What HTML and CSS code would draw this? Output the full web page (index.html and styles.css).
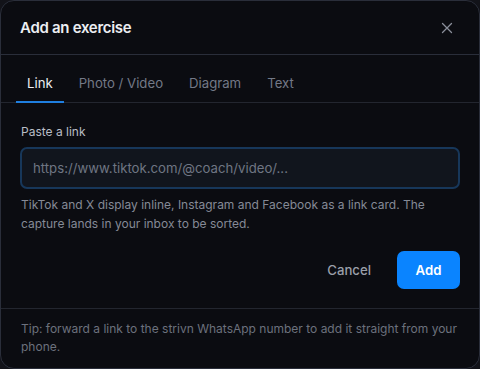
FILE: index.html
```html
<!DOCTYPE html>
<html>
<head>
<meta charset="utf-8">
<link rel="stylesheet" href="styles.css">
</head>
<body>
<div class="dialog">
  <div class="header">
    <h1 class="title">Add an exercise</h1>
    <button class="close" aria-label="Close">
      <svg width="12" height="12" viewBox="0 0 12 12"><path d="M1.5 1.5 L10.5 10.5 M10.5 1.5 L1.5 10.5" stroke="currentColor" stroke-width="1.3" stroke-linecap="round"/></svg>
    </button>
  </div>
  <div class="tabs">
    <div class="tab active">Link</div>
    <div class="tab">Photo / Video</div>
    <div class="tab">Diagram</div>
    <div class="tab">Text</div>
  </div>
  <div class="body">
    <label class="label">Paste a link</label>
    <div class="input">https://www.tiktok.com/@coach/video/...</div>
    <p class="help">TikTok and X display inline, Instagram and Facebook as a link card. The capture lands in your inbox to be sorted.</p>
    <div class="actions">
      <button class="btn cancel">Cancel</button>
      <button class="btn add">Add</button>
    </div>
  </div>
  <div class="footer">Tip: forward a link to the strivn WhatsApp number to add it straight from your phone.</div>
</div>
</body>
</html>
```
FILE: styles.css
```css
* { box-sizing: border-box; }
html, body { margin: 0; padding: 0; background: #121319; }
body { font-family: Inter, "Noto Sans", sans-serif; }
.dialog {
  width: 480px;
  height: 369px;
  background: #0b0c11;
  border: 1px solid #2a2e3a;
  border-radius: 14px;
  display: flex;
  flex-direction: column;
  overflow: hidden;
}
.header {
  height: 54px;
  display: flex;
  align-items: center;
  justify-content: space-between;
  padding: 0 20px 0 19px;
  border-bottom: 1px solid #2a2e3a;
}
.title {
  margin: 0;
  font-size: 15px;
  font-weight: 600;
  color: #eceef2;
  letter-spacing: -0.3px;
}
.close {
  background: none;
  border: 0;
  padding: 0;
  width: 16px;
  height: 16px;
  display: flex;
  align-items: center;
  justify-content: center;
  color: #8a8f9a;
  margin-right: 4px;
}
.tabs {
  display: flex;
  gap: 4px;
  padding: 0 15px;
  height: 48px;
  border-bottom: 1px solid #23262f;
}
.tab {
  padding: 10px 11px 0;
  display: flex;
  align-items: center;
  font-size: 13.2px;
  color: #737987;
  border-bottom: 2px solid transparent;
  margin-bottom: -1px;
}
.tab.active {
  color: #eceef2;
  border-bottom-color: #1f7fe0;
}
.body {
  padding: 20px 19px 19px;
  display: flex;
  flex-direction: column;
}
.label {
  font-size: 12px;
  line-height: 18px;
  color: #b9bdc6;
  padding-left: 1px;
}
.input {
  margin-top: 6px;
  height: 42px;
  border: 2px solid #17375a;
  border-radius: 7px;
  background: #11151d;
  padding: 0 11px;
  display: flex;
  align-items: center;
  font-size: 13.2px;
  color: #6f7583;
}
.help {
  margin: 6px 0 0 1px;
  font-size: 12px;
  line-height: 19px;
  color: #858a96;
}
.actions {
  display: flex;
  justify-content: flex-end;
  align-items: center;
  gap: 12px;
  margin-top: 18px;
}
.btn {
  font-family: inherit;
  font-size: 13.2px;
  border: 0;
  border-radius: 7px;
  height: 38px;
  cursor: pointer;
}
.cancel {
  background: transparent;
  color: #9a9fa9;
  padding: 0 14px;
  font-weight: 500;
}
.add {
  background: #0a84ff;
  color: #ffffff;
  font-weight: 600;
  width: 63px;
}
.footer {
  border-top: 1px solid #23262f;
  padding: 11px 20px 0;
  font-size: 12px;
  line-height: 18px;
  color: #6c717d;
}
```
